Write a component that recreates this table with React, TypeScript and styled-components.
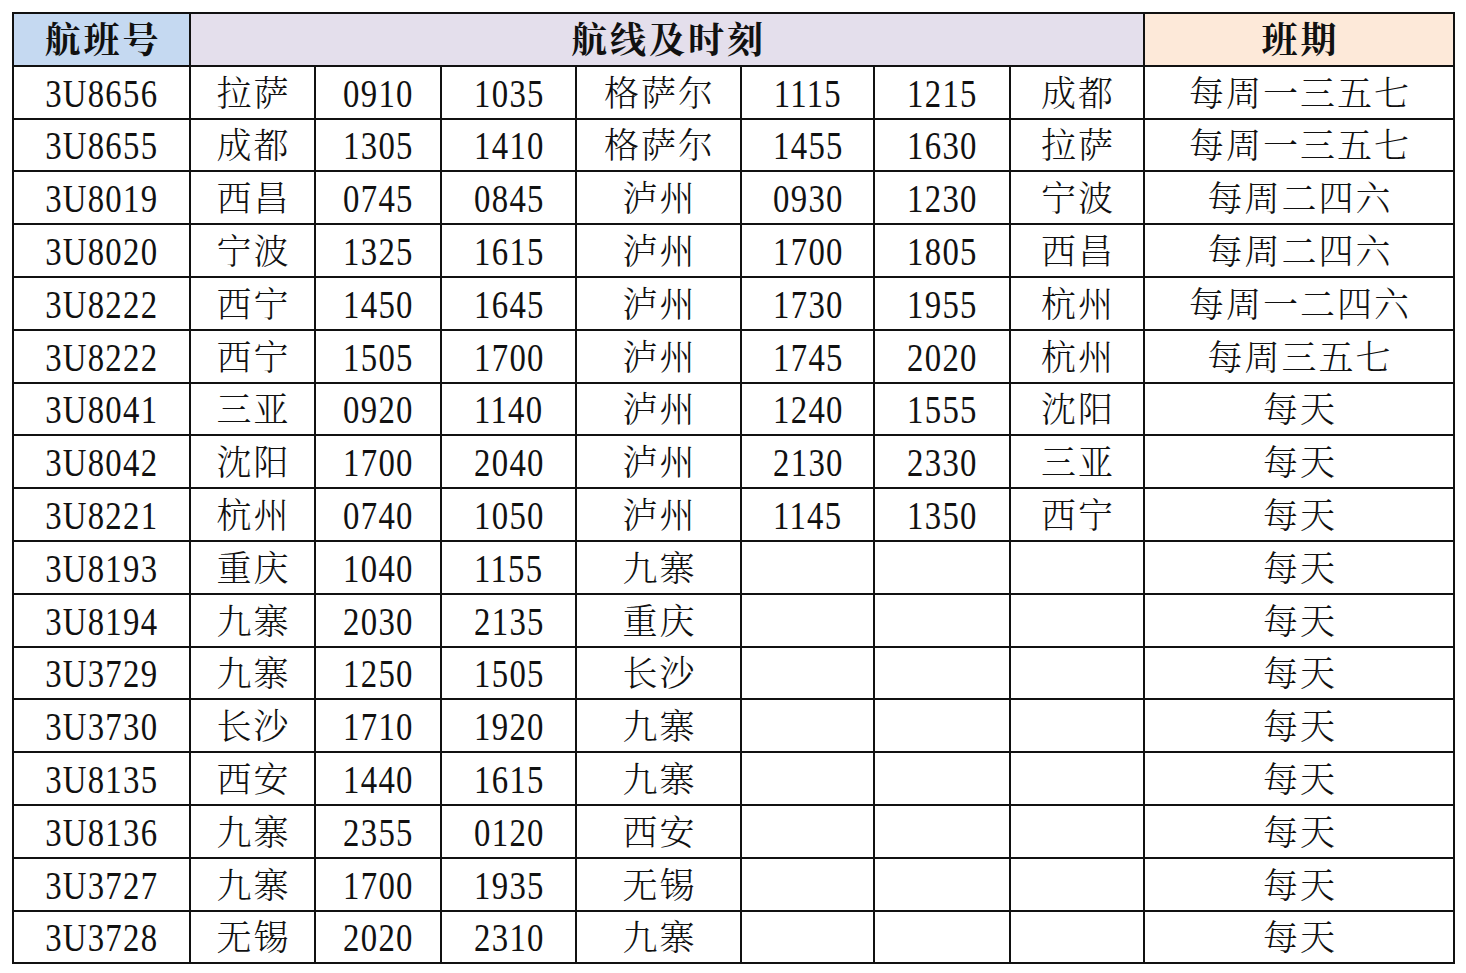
import styled, { createGlobalStyle } from 'styled-components';

const GlobalStyle = createGlobalStyle`
	html, body {
		margin: 0;
		padding: 0;
		background: #ffffff;
	}
`

const Page = styled.div`
	padding: 12px 0 0 12px;
	font-family: "Liberation Serif", "Noto Serif CJK SC", "Noto Sans CJK SC", serif;
	color: #111;
`

const Table = styled.table`
	border-collapse: collapse;
	table-layout: fixed;
	width: 1441px;
`

const Row = styled.tr`
	height: 52.8px;
`

const HeadCell = styled.th<{ $bg: string }>`
	background: ${p => p.$bg};
	border: 2px solid #111;
	font-size: 36px;
	font-weight: bold;
	letter-spacing: 3px;
	text-align: center;
	padding: 4px 0 0 3px;
	line-height: 1;
`

const Cell = styled.td<{ $cjk?: boolean }>`
	border: 2px solid #111;
	text-align: center;
	padding: ${p => (p.$cjk ? '4px 0 0 2px' : '2px 0 0 0')};
	line-height: 1;
	font-size: ${p => (p.$cjk ? '35px' : '39px')};
	letter-spacing: ${p => (p.$cjk ? '2px' : '0')};
	font-weight: ${p => (p.$cjk ? 300 : 400)};
	white-space: nowrap;
`

// digits in the sheet are a tall, narrow face
const Digits = styled.span`
	display: inline-block;
	letter-spacing: 1.5px;
	padding-left: 1.5px;
	transform: scaleX(0.84);
`

const widths = [177, 125, 126, 135, 165, 133, 136, 134, 310]

interface Flight {
	no: string,
	from: string,
	dep: string,
	arr: string,
	via: string,
	dep2: string,
	arr2: string,
	to: string,
	days: string,
}

const flights: Array<Flight> = [
	{ no: '3U8656', from: '拉萨', dep: '0910', arr: '1035', via: '格萨尔', dep2: '1115', arr2: '1215', to: '成都', days: '每周一三五七' },
	{ no: '3U8655', from: '成都', dep: '1305', arr: '1410', via: '格萨尔', dep2: '1455', arr2: '1630', to: '拉萨', days: '每周一三五七' },
	{ no: '3U8019', from: '西昌', dep: '0745', arr: '0845', via: '泸州', dep2: '0930', arr2: '1230', to: '宁波', days: '每周二四六' },
	{ no: '3U8020', from: '宁波', dep: '1325', arr: '1615', via: '泸州', dep2: '1700', arr2: '1805', to: '西昌', days: '每周二四六' },
	{ no: '3U8222', from: '西宁', dep: '1450', arr: '1645', via: '泸州', dep2: '1730', arr2: '1955', to: '杭州', days: '每周一二四六' },
	{ no: '3U8222', from: '西宁', dep: '1505', arr: '1700', via: '泸州', dep2: '1745', arr2: '2020', to: '杭州', days: '每周三五七' },
	{ no: '3U8041', from: '三亚', dep: '0920', arr: '1140', via: '泸州', dep2: '1240', arr2: '1555', to: '沈阳', days: '每天' },
	{ no: '3U8042', from: '沈阳', dep: '1700', arr: '2040', via: '泸州', dep2: '2130', arr2: '2330', to: '三亚', days: '每天' },
	{ no: '3U8221', from: '杭州', dep: '0740', arr: '1050', via: '泸州', dep2: '1145', arr2: '1350', to: '西宁', days: '每天' },
	{ no: '3U8193', from: '重庆', dep: '1040', arr: '1155', via: '九寨', dep2: '', arr2: '', to: '', days: '每天' },
	{ no: '3U8194', from: '九寨', dep: '2030', arr: '2135', via: '重庆', dep2: '', arr2: '', to: '', days: '每天' },
	{ no: '3U3729', from: '九寨', dep: '1250', arr: '1505', via: '长沙', dep2: '', arr2: '', to: '', days: '每天' },
	{ no: '3U3730', from: '长沙', dep: '1710', arr: '1920', via: '九寨', dep2: '', arr2: '', to: '', days: '每天' },
	{ no: '3U8135', from: '西安', dep: '1440', arr: '1615', via: '九寨', dep2: '', arr2: '', to: '', days: '每天' },
	{ no: '3U8136', from: '九寨', dep: '2355', arr: '0120', via: '西安', dep2: '', arr2: '', to: '', days: '每天' },
	{ no: '3U3727', from: '九寨', dep: '1700', arr: '1935', via: '无锡', dep2: '', arr2: '', to: '', days: '每天' },
	{ no: '3U3728', from: '无锡', dep: '2020', arr: '2310', via: '九寨', dep2: '', arr2: '', to: '', days: '每天' },
]

function Num({ value }: { value: string }) {
	return <Cell>{value && <Digits>{value}</Digits>}</Cell>
}

function App() {
	return (
		<Page>
			<GlobalStyle />
			<Table>
				<colgroup>
					{widths.map((w, i) => <col key={i} style={{ width: w }} />)}
				</colgroup>
				<thead>
					<Row>
						<HeadCell $bg="#c5d9f1">航班号</HeadCell>
						<HeadCell $bg="#e4dfec" colSpan={7}>航线及时刻</HeadCell>
						<HeadCell $bg="#fde9d9">班期</HeadCell>
					</Row>
				</thead>
				<tbody>
					{flights.map((f, i) => (
						<Row key={i}>
							<Num value={f.no} />
							<Cell $cjk>{f.from}</Cell>
							<Num value={f.dep} />
							<Num value={f.arr} />
							<Cell $cjk>{f.via}</Cell>
							<Num value={f.dep2} />
							<Num value={f.arr2} />
							<Cell $cjk>{f.to}</Cell>
							<Cell $cjk>{f.days}</Cell>
						</Row>
					))}
				</tbody>
			</Table>
		</Page>
	)
}

export default App
